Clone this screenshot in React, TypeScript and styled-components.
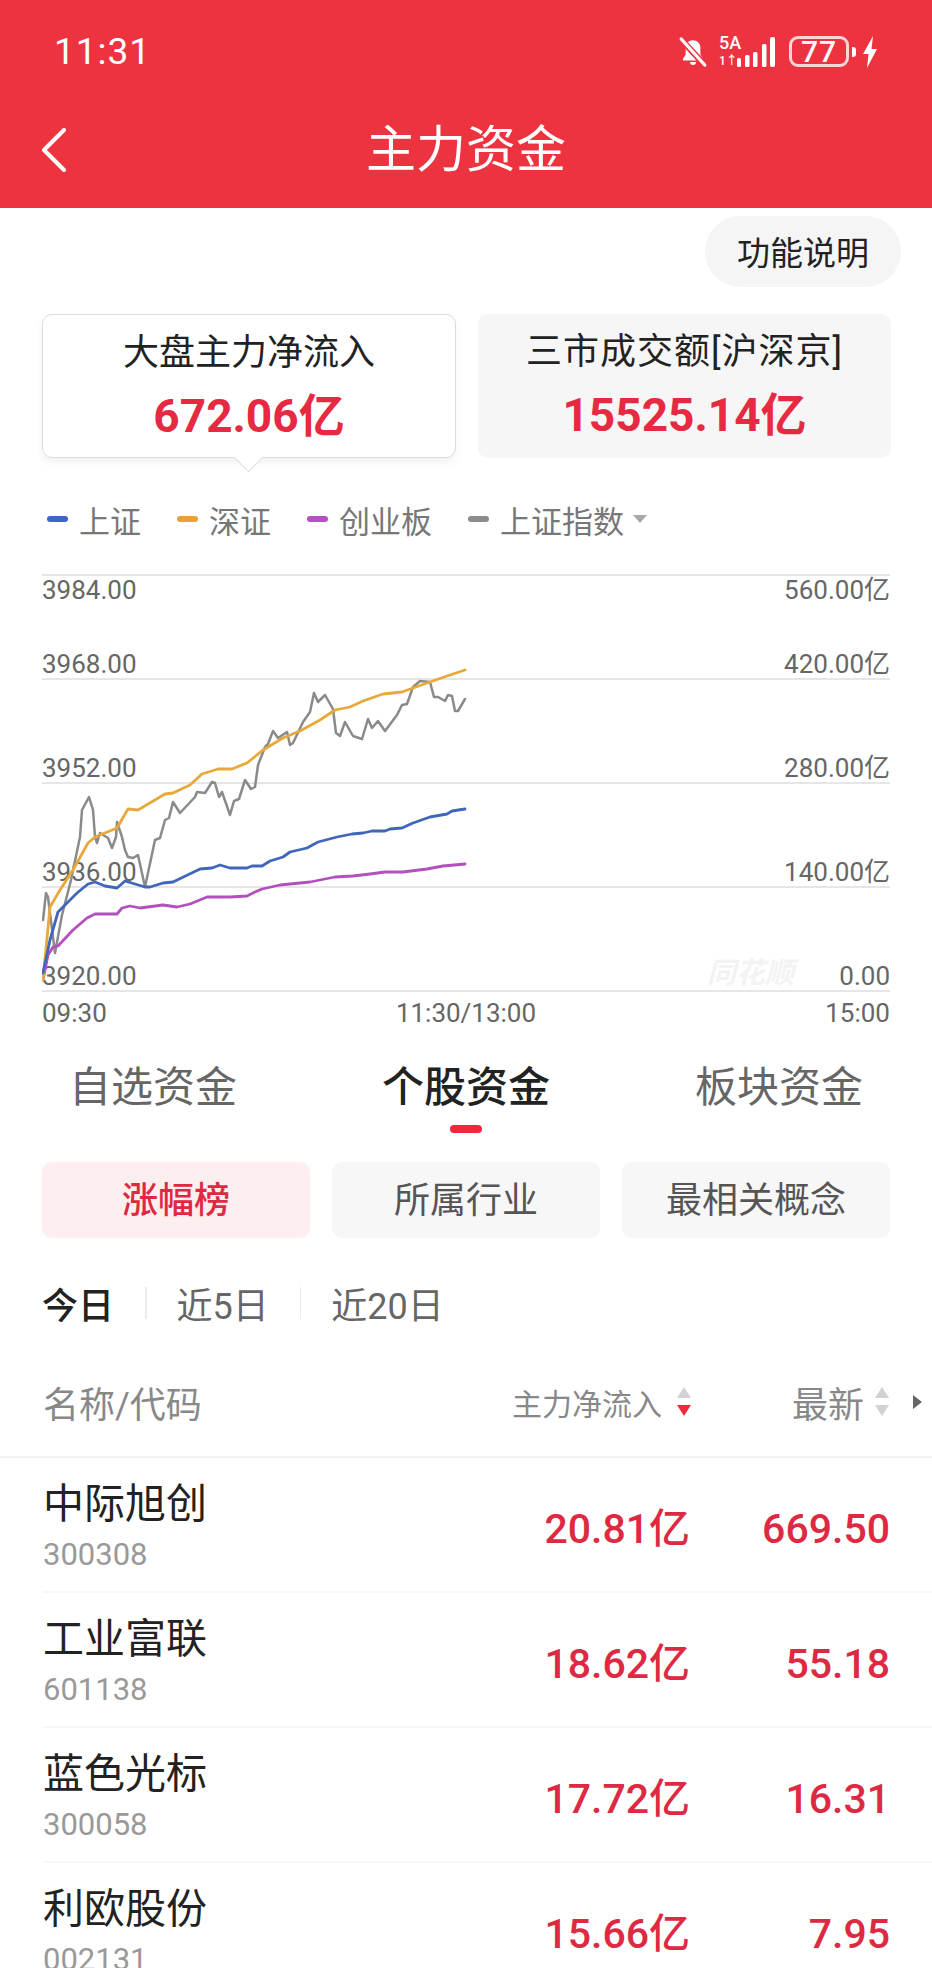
import React from 'react';
import styled, { createGlobalStyle } from 'styled-components';

const RED = '#ee3340';
const FALL_TEXT = '#dd2a42';
const FONT = '"Roboto", "Noto Sans CJK SC", sans-serif';

const GlobalStyle = createGlobalStyle`
  html, body {
    margin: 0;
    padding: 0;
    background: #fff;
  }
  body {
    font-family: ${FONT};
    color: #222;
  }
  * {
    box-sizing: border-box;
  }
`;

const Page = styled.div`
  width: 932px;
  height: 1968px;
  overflow: hidden;
  background: #fff;
`;

const Header = styled.header`
  height: 208px;
  background: ${RED};
  color: #fff;
`;

const StatusBar = styled.div`
  height: 100px;
  padding: 3px 54px 0;
  display: flex;
  align-items: center;
  justify-content: space-between;
`;

const Clock = styled.span`
  font-size: 37px;
  letter-spacing: 1px;
  line-height: 40px;
`;

const StatusIcons = styled.div`
  display: flex;
  align-items: center;
`;

const NetworkLabel = styled.div`
  width: 24px;
  margin-left: 11px;
  display: flex;
  flex-direction: column;
  font-weight: 500;
  line-height: 14px;
  font-size: 18px;
`;

const NetworkRate = styled.span`
  font-size: 12px;
  margin-top: 4px;
`;

const Battery = styled.div`
  width: 60px;
  height: 31px;
  margin-left: 13px;
  border: 3px solid #fbd5d8;
  border-radius: 9px;
  display: flex;
  align-items: center;
  justify-content: center;
  font-size: 30px;
  font-weight: 500;
  letter-spacing: 1px;
  line-height: 1;
`;

const BatteryCap = styled.div`
  width: 4px;
  height: 10px;
  margin: 0 6px 0 3px;
  background: #fff;
  border-radius: 0 3px 3px 0;
`;

const NavBar = styled.nav`
  height: 108px;
  padding: 0 42px 8px;
  display: grid;
  grid-template-columns: 1fr auto 1fr;
  align-items: center;
`;

const NavTitle = styled.h1`
  margin: 0;
  font-size: 50px;
  line-height: 60px;
  font-weight: 400;
`;

const HelpRow = styled.div`
  display: flex;
  justify-content: flex-end;
  padding: 8px 31px 0 0;
`;

const HelpButton = styled.div`
  width: 196px;
  height: 71px;
  padding-bottom: 2px;
  border-radius: 36px;
  background: #f5f5f5;
  display: flex;
  align-items: center;
  justify-content: center;
  font-size: 33px;
`;

const Cards = styled.section`
  margin-top: 27px;
  padding: 0 41px 0 42px;
  display: grid;
  grid-template-columns: 414px 413px;
  column-gap: 22px;
`;

const Card = styled.div<{ $active?: boolean }>`
  position: relative;
  height: 144px;
  border-radius: 10px;
  padding-top: 17px;
  text-align: center;
  background: ${(p) => (p.$active ? '#fff' : '#f6f6f6')};
  border: ${(p) => (p.$active ? '1.5px solid #dcdcdc' : 'none')};
  box-shadow: ${(p) => (p.$active ? '0 5px 8px rgba(0, 0, 0, 0.05)' : 'none')};
`;

const CardTip = styled.div`
  position: absolute;
  left: 50%;
  bottom: -11px;
  width: 21px;
  height: 21px;
  margin-left: -11px;
  background: #fff;
  border-right: 1.5px solid #dcdcdc;
  border-bottom: 1.5px solid #dcdcdc;
  transform: rotate(45deg);
`;

const CardTitle = styled.div<{ $wide?: boolean }>`
  font-size: 36px;
  line-height: 42px;
  letter-spacing: ${(p) => (p.$wide ? '1px' : '0')};
`;

const CardValue = styled.div`
  margin-top: 16px;
  font-size: 46px;
  line-height: 52px;
  font-weight: 700;
  color: #e62a42;
`;

const Legend = styled.div`
  margin-top: 41px;
  height: 40px;
  padding-left: 47px;
  display: flex;
  align-items: center;
  gap: 36px;
`;

const LegendItem = styled.div`
  display: flex;
  align-items: center;
  gap: 11px;
  font-size: 31px;
  color: #777;
`;

const LegendDash = styled.i<{ $color: string }>`
  width: 21px;
  height: 6px;
  border-radius: 3px;
  background: ${(p) => p.$color};
`;

const LegendCaret = styled.i`
  width: 0;
  height: 0;
  margin-left: -2px;
  border-left: 7px solid transparent;
  border-right: 7px solid transparent;
  border-top: 8px solid #aaa;
`;

const Plot = styled.section`
  position: relative;
  margin: 35px 42px 0;
  border-top: 2px solid #e6e6e6;
`;

const Band = styled.div<{ $split?: boolean }>`
  height: 104px;
  border-bottom: 2px solid #e6e6e6;
  display: flex;
  flex-direction: column;
  justify-content: ${(p) => (p.$split ? 'space-between' : 'flex-end')};
`;

const AxisRow = styled.div`
  display: flex;
  justify-content: space-between;
  font-size: 26px;
  line-height: 28px;
  color: #666;
`;

const Lines = styled.svg`
  position: absolute;
  left: 0;
  top: -2px;
  width: 850px;
  height: 420px;
`;

const Watermark = styled.span`
  position: absolute;
  left: 665px;
  bottom: 3px;
  font-size: 29px;
  line-height: 32px;
  font-weight: 700;
  font-style: italic;
  color: #f3f3f3;
`;

const TimeAxis = styled(AxisRow)`
  margin: 5px 42px 0;
  line-height: 32px;
`;

const Tabs = styled.div`
  margin-top: 29px;
  display: grid;
  grid-template-columns: repeat(3, 313px);
  justify-content: center;
`;

const Tab = styled.div<{ $active?: boolean }>`
  display: flex;
  flex-direction: column;
  align-items: center;
  gap: 7px;
  font-size: 42px;
  line-height: 60px;
  font-weight: ${(p) => (p.$active ? 500 : 400)};
  color: ${(p) => (p.$active ? '#222' : '#666')};
`;

const TabMark = styled.i<{ $active?: boolean }>`
  width: 32px;
  height: 8px;
  border-radius: 4px;
  background: ${(p) => (p.$active ? '#f0283c' : 'transparent')};
`;

const Chips = styled.div`
  margin-top: 29px;
  padding: 0 42px 0 42px;
  display: grid;
  grid-template-columns: repeat(3, 1fr);
  column-gap: 22px;
`;

const Chip = styled.div<{ $active?: boolean }>`
  height: 76px;
  padding-bottom: 6px;
  border-radius: 10px;
  display: flex;
  align-items: center;
  justify-content: center;
  font-size: 36px;
  font-weight: ${(p) => (p.$active ? 500 : 400)};
  color: ${(p) => (p.$active ? FALL_TEXT : '#555')};
  background: ${(p) => (p.$active ? '#fdeef0' : '#f7f7f7')};
`;

const Ranges = styled.div`
  margin-top: 45px;
  height: 40px;
  padding-left: 42px;
  display: flex;
  align-items: center;
`;

const RangeItem = styled.span<{ $active?: boolean }>`
  font-size: 36px;
  font-weight: ${(p) => (p.$active ? 500 : 400)};
  color: ${(p) => (p.$active ? '#222' : '#666')};
`;

const RangeDivider = styled.i`
  width: 1.5px;
  height: 32px;
  margin: 0 30px 0 31px;
  background: #ececec;
`;

const TableHead = styled.div`
  margin-top: 58px;
  height: 77px;
  padding: 0 10px 33px 43px;
  border-bottom: 2px solid #f2f2f2;
  display: flex;
  align-items: center;
  color: #888;
`;

const HeadName = styled.span`
  font-size: 36px;
`;

const HeadCell = styled.div<{ $gap: number; $offset: string }>`
  display: flex;
  align-items: center;
  gap: ${(p) => p.$gap}px;
  margin-left: ${(p) => p.$offset};
`;

const HeadLabel = styled.span<{ $size: number }>`
  font-size: ${(p) => p.$size}px;
  white-space: nowrap;
`;

const MoreCaret = styled.i`
  width: 0;
  height: 0;
  margin-left: 23px;
  border-top: 7px solid transparent;
  border-bottom: 7px solid transparent;
  border-left: 9px solid #666;
`;

const Row = styled.div`
  height: 135px;
  margin-left: 43px;
  padding-right: 42px;
  border-bottom: 2px solid #f7f7f7;
  display: grid;
  grid-template-columns: 1fr 190px 200px;
  align-items: center;
`;

const NameCell = styled.div`
  display: flex;
  flex-direction: column;
  gap: 6px;
`;

const StockName = styled.div`
  font-size: 41px;
  line-height: 54px;
  color: #222;
`;

const StockCode = styled.div`
  font-size: 31px;
  line-height: 36px;
  color: #999;
`;

const Value = styled.div`
  margin-top: 8px;
  text-align: right;
  font-size: 41px;
  line-height: 50px;
  font-weight: 500;
  color: ${FALL_TEXT};
`;

const BellOff = () => (
  <svg width="30" height="30" viewBox="0 0 24 24">
    <path fill="#fff" d="M12 2.5c-3.4 0-5.9 2.6-5.9 6v5.6L4 17.4v1.3h16v-1.3l-2.1-3.3V8.5c0-3.4-2.5-6-5.9-6z" />
    <path fill="#fff" d="M9.6 20h4.8a2.4 2.4 0 0 1-4.8 0z" />
    <path stroke={RED} strokeWidth="5" d="M2 1.5 22 23" />
    <path stroke="#fff" strokeWidth="2.4" strokeLinecap="round" d="M2.5 1.5 21.5 22.5" />
  </svg>
);

const SignalBars = () => (
  <svg width="40" height="31" viewBox="0 0 40 31" style={{ marginLeft: -7 }}>
    <rect x="1" y="22" width="4" height="9" rx="1.5" fill="#fff" />
    <rect x="9" y="19" width="4.5" height="12" rx="1.5" fill="#fff" />
    <rect x="17" y="16" width="4.5" height="15" rx="1.5" fill="#fff" />
    <rect x="26" y="8" width="4.5" height="23" rx="1.5" fill="#fff" />
    <rect x="34" y="1" width="5" height="30" rx="2" fill="#fff" />
  </svg>
);

const Bolt = () => (
  <svg width="16" height="32" viewBox="0 0 16 32">
    <path fill="#fff" d="M11 0 1 18h5.5L5 32 15 13H9.5z" />
  </svg>
);

const BackIcon = () => (
  <svg width="24" height="44" viewBox="0 0 24 44" fill="none">
    <path stroke="#fff" strokeWidth="4" strokeLinecap="round" strokeLinejoin="round" d="M22 2 2 22l20 20" />
  </svg>
);

const SortIcon = ({ down }: { down?: boolean }) => (
  <svg width="16" height="30" viewBox="0 0 16 30">
    <path fill="#d2d2d2" d="M8 0l7 11H1z" />
    <path fill={down ? '#ee2a3c' : '#d2d2d2'} d="M8 29l-7-11h14z" />
  </svg>
);

const GRAY = '43,920 46,893 48,897 55,953 62,915 71,880 80,837 82,810 89,797 93,810 95,837 97,843 100,833 108,838 112,848 116,837 117,822 122,837 125,850 128,857 133,858 138,855 145,887 155,840 160,838 165,820 169,818 173,802 180,813 195,797 197,792 205,793 212,782 215,783 219,797 222,792 230,815 234,801 239,799 245,780 251,789 255,787 258,765 265,747 268,744 273,731 278,738 287,732 290,745 293,743 303,722 310,712 314,693 318,702 325,695 333,709 336,733 340,736 345,722 353,736 362,739 368,719 372,728 378,721 385,731 397,715 402,705 407,704 413,687 420,681 430,682 434,697 438,697 445,701 448,695 452,696 455,711 458,711 465,699';
const PURPLE = '43,980 48,955 53,947 58,946 73,930 87,918 95,914 117,914 122,908 130,906 140,908 163,905 177,907 190,904 207,897 230,897 247,896 255,892 262,889 280,885 310,882 330,878 335,877 353,876 370,874 385,872 403,872 427,869 443,866 465,864';
const ORANGE = '43,980 50,907 60,890 73,870 88,843 95,837 117,828 128,809 138,810 165,794 173,793 190,785 202,774 218,769 232,769 247,763 263,750 283,738 300,731 320,720 335,710 350,707 363,701 383,694 402,692 413,688 430,682 447,676 465,670';
const BLUE = '43,973 50,940 58,912 67,903 77,893 88,884 95,882 105,886 117,888 125,881 145,887 150,887 163,883 173,882 200,869 212,868 220,865 230,868 247,868 252,866 262,866 270,861 283,857 290,852 307,848 318,842 337,837 352,834 363,833 372,831 385,831 390,829 402,828 413,823 430,817 447,814 452,811 465,809';

const LEGEND = [
  { color: '#3f66c4', label: '上证' },
  { color: '#e8a037', label: '深证' },
  { color: '#b650c4', label: '创业板' },
  { color: '#8c8c8c', label: '上证指数' },
];

const STOCKS = [
  { name: '中际旭创', code: '300308', flow: '20.81亿', price: '669.50' },
  { name: '工业富联', code: '601138', flow: '18.62亿', price: '55.18' },
  { name: '蓝色光标', code: '300058', flow: '17.72亿', price: '16.31' },
  { name: '利欧股份', code: '002131', flow: '15.66亿', price: '7.95' },
];

const App = () => (
  <Page>
    <GlobalStyle />
    <Header>
      <StatusBar>
        <Clock>11:31</Clock>
        <StatusIcons>
          <BellOff />
          <NetworkLabel>
            <span>5A</span>
            <NetworkRate>1↑</NetworkRate>
          </NetworkLabel>
          <SignalBars />
          <Battery>77</Battery>
          <BatteryCap />
          <Bolt />
        </StatusIcons>
      </StatusBar>
      <NavBar>
        <BackIcon />
        <NavTitle>主力资金</NavTitle>
      </NavBar>
    </Header>

    <HelpRow>
      <HelpButton>功能说明</HelpButton>
    </HelpRow>

    <Cards>
      <Card $active>
        <CardTitle>大盘主力净流入</CardTitle>
        <CardValue>672.06亿</CardValue>
        <CardTip />
      </Card>
      <Card>
        <CardTitle $wide>三市成交额[沪深京]</CardTitle>
        <CardValue>15525.14亿</CardValue>
      </Card>
    </Cards>

    <Legend>
      {LEGEND.map((item) => (
        <LegendItem key={item.label}>
          <LegendDash $color={item.color} />
          {item.label}
          {item.label === '上证指数' && <LegendCaret />}
        </LegendItem>
      ))}
    </Legend>

    <Plot>
      <Band $split>
        <AxisRow>
          <span>3984.00</span>
          <span>560.00亿</span>
        </AxisRow>
        <AxisRow>
          <span>3968.00</span>
          <span>420.00亿</span>
        </AxisRow>
      </Band>
      <Band>
        <AxisRow>
          <span>3952.00</span>
          <span>280.00亿</span>
        </AxisRow>
      </Band>
      <Band>
        <AxisRow>
          <span>3936.00</span>
          <span>140.00亿</span>
        </AxisRow>
      </Band>
      <Band>
        <AxisRow>
          <span>3920.00</span>
          <span>0.00</span>
        </AxisRow>
      </Band>
      <Watermark>同花顺</Watermark>
      <Lines viewBox="42 574 850 420" fill="none" strokeLinejoin="round" strokeLinecap="round">
        <polyline points={GRAY} stroke="#8a8a8a" strokeWidth="2.5" />
        <polyline points={PURPLE} stroke="#b250be" strokeWidth="2.8" />
        <polyline points={ORANGE} stroke="#e8a93a" strokeWidth="2.8" />
        <polyline points={BLUE} stroke="#3f66b8" strokeWidth="2.8" />
      </Lines>
    </Plot>

    <TimeAxis>
      <span>09:30</span>
      <span>11:30/13:00</span>
      <span>15:00</span>
    </TimeAxis>

    <Tabs>
      <Tab>
        自选资金
        <TabMark />
      </Tab>
      <Tab $active>
        个股资金
        <TabMark $active />
      </Tab>
      <Tab>
        板块资金
        <TabMark />
      </Tab>
    </Tabs>

    <Chips>
      <Chip $active>涨幅榜</Chip>
      <Chip>所属行业</Chip>
      <Chip>最相关概念</Chip>
    </Chips>

    <Ranges>
      <RangeItem $active>今日</RangeItem>
      <RangeDivider />
      <RangeItem>近5日</RangeItem>
      <RangeDivider />
      <RangeItem>近20日</RangeItem>
    </Ranges>

    <TableHead>
      <HeadName>名称/代码</HeadName>
      <HeadCell $gap={14} $offset="auto">
        <HeadLabel $size={30}>主力净流入</HeadLabel>
        <SortIcon down />
      </HeadCell>
      <HeadCell $gap={10} $offset="100px">
        <HeadLabel $size={36}>最新</HeadLabel>
        <SortIcon />
      </HeadCell>
      <MoreCaret />
    </TableHead>

    {STOCKS.map((stock) => (
      <Row key={stock.code}>
        <NameCell>
          <StockName>{stock.name}</StockName>
          <StockCode>{stock.code}</StockCode>
        </NameCell>
        <Value>{stock.flow}</Value>
        <Value>{stock.price}</Value>
      </Row>
    ))}
  </Page>
);

export default App;
